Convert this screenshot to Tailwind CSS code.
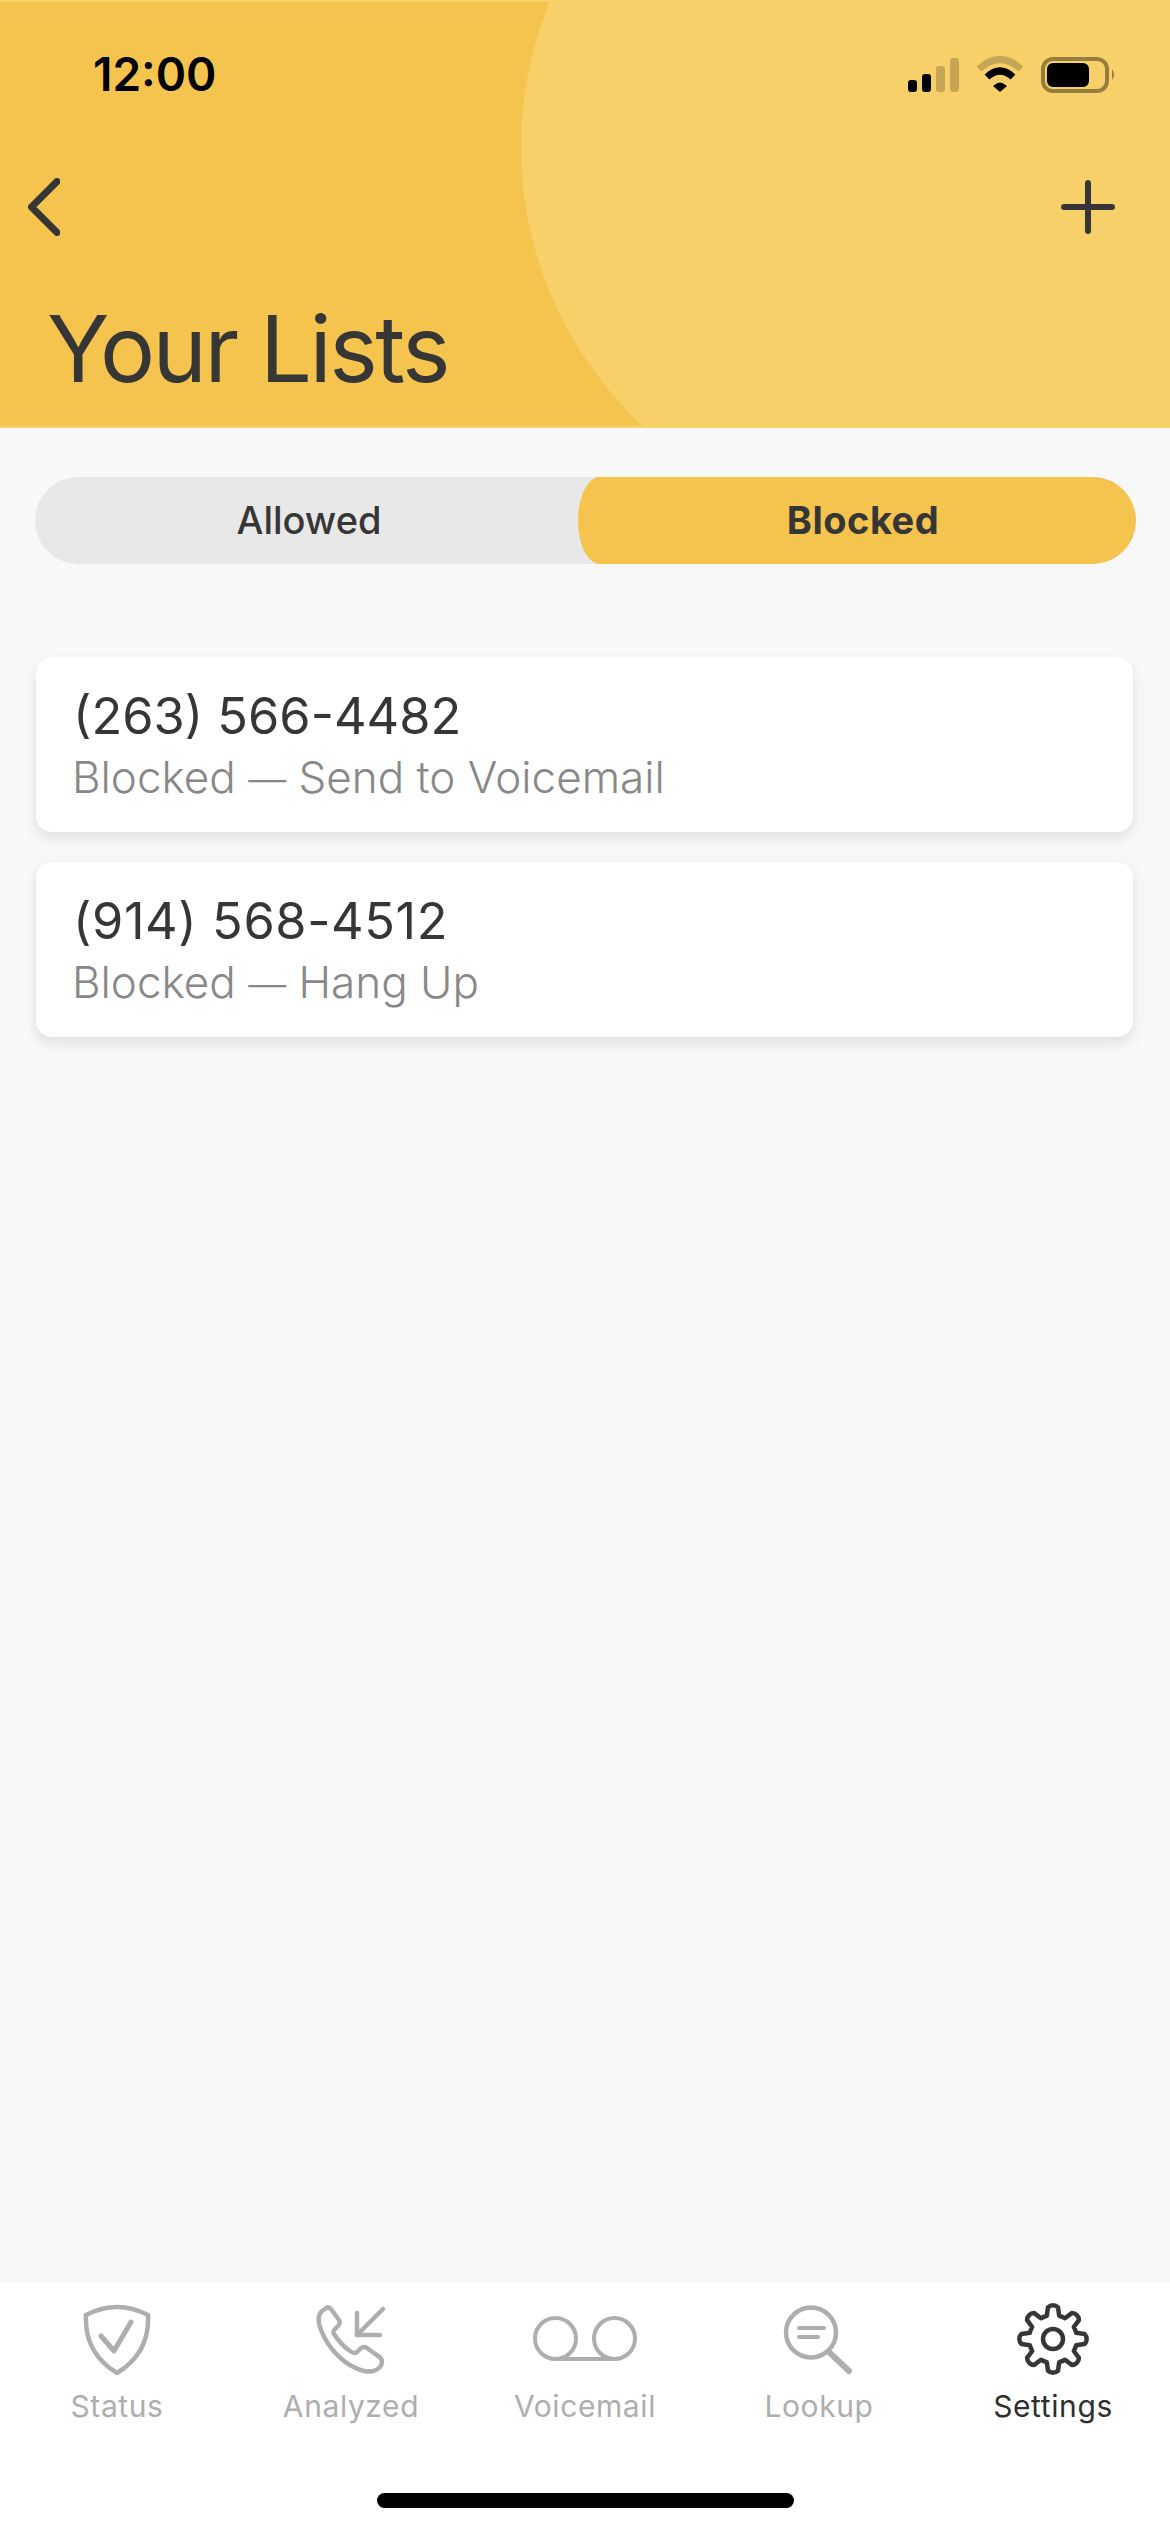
<!DOCTYPE html>
<html>
<head>
<meta charset="utf-8">
<script src="https://cdn.jsdelivr.net/npm/@tailwindcss/browser@4"></script>
</head>
<body class="m-0 bg-[#f8f8f8]">
<div class="relative w-[1170px] h-[2532px] overflow-hidden flex flex-col bg-[#f8f8f8] font-['Inter','Liberation_Sans',sans-serif]">
  <header class="relative h-[428px] shrink-0 overflow-hidden bg-[#f5c44e] border-y-[2px] border-y-[#f8d36a]">
    <div class="absolute left-[521px] top-[-235px] w-[760px] h-[760px] rounded-full bg-[#f8d069]"></div>
    <div class="absolute left-[901px] right-0 top-0 bottom-0 bg-[#f8d069]"></div>
    <div class="relative h-[166px] flex items-start justify-between">
      <span class="ml-[93px] mt-[45px] text-[46px] leading-[54px] font-semibold text-black">12:00</span>
      <svg class="mt-[54px] mr-[54px]" width="208" height="37" viewBox="0 0 208 37">
        <rect x="0" y="24" width="9" height="12" rx="3" fill="#000"/>
        <rect x="14" y="18" width="9" height="18" rx="3" fill="#000"/>
        <rect x="28" y="10" width="9" height="26" rx="3" fill="#000" opacity=".2"/>
        <rect x="42" y="2" width="9" height="34" rx="3" fill="#000" opacity=".2"/>
        <path d="M71 13Q92-6 113 13" fill="none" stroke="#000" stroke-opacity=".2" stroke-width="7"/>
        <path d="M79 21Q92 9 105 21" fill="none" stroke="#000" stroke-width="7"/>
        <path d="M85 30Q92 23 99 30L92 36z" fill="#000"/>
        <rect x="135" y="3" width="64" height="32" rx="10" fill="none" stroke="#000" stroke-opacity=".4" stroke-width="4"/>
        <rect x="139" y="7" width="42" height="24" rx="6" fill="#000"/>
        <path d="M204 13q4 5.500 0 11z" fill="#000" fill-opacity=".4"/>
      </svg>
    </div>
    <div class="relative h-[78px] flex items-center justify-between pl-[28px] pr-[55px]">
      <svg width="32" height="58" viewBox="0 0 32 58" fill="none" stroke="#363636" stroke-width="7" stroke-linecap="round" stroke-linejoin="round"><path d="M29 3.500 3.500 29 29 54.500"/></svg>
      <svg width="54" height="54" viewBox="0 0 54 54" fill="none" stroke="#363636" stroke-width="6" stroke-linecap="round"><path d="M27 3v48M3 27h48"/></svg>
    </div>
    <h1 class="relative ml-[47px] mt-[48px] text-[92px] leading-[110px] font-normal tracking-[-2.5px] text-[#363636]">Your Lists</h1>
  </header>

  <main class="flex-1 pl-[35px] pt-[49px]">
    <div class="relative h-[87px] w-[1101px] rounded-full bg-[#e8e8e8] flex text-[38px] text-[#363636]">
      <div class="w-[548px] flex items-center justify-center font-medium">Allowed</div>
      <div class="absolute left-[543px] right-0 top-0 bottom-0 rounded-[22px_44px_44px_22px/44px] bg-[#f5c44e] flex items-center justify-center pl-[12px] font-bold tracking-[0.5px]">Blocked</div>
    </div>
    <div class="mt-[93px] ml-[1px] flex flex-col gap-[30px] w-[1097px]">
      <div class="h-[175px] rounded-[16px] bg-white shadow-[0_6px_14px_rgba(0,0,0,0.1)] px-[37px] pt-[28px]">
        <div class="text-[50.5px] leading-[62px] text-[#363636]">(263) 566-4482</div>
        <div class="-ml-[1px] text-[44px] leading-[61px] font-light text-[#888888]">Blocked <span class="text-[38px]">—</span> Send to Voicemail</div>
      </div>
      <div class="h-[175px] rounded-[16px] bg-white shadow-[0_6px_14px_rgba(0,0,0,0.1)] px-[37px] pt-[28px]">
        <div class="text-[50.5px] leading-[62px] tracking-[0.6px] text-[#363636]">(914) 568-4512</div>
        <div class="-ml-[1px] text-[44px] leading-[61px] font-light text-[#888888]">Blocked <span class="text-[38px]">—</span> Hang Up</div>
      </div>
    </div>
  </main>

  <nav class="h-[249px] shrink-0 bg-white grid grid-cols-5 text-[30px] leading-[36px] tracking-[0.6px] text-[#aeaeae] pt-[20px]">
    <div class="flex flex-col items-center gap-[13px]">
      <svg width="72" height="72" viewBox="0 0 72 72" fill="none" stroke="#aeaeae" stroke-width="4.500" stroke-linecap="round"><path d="M5 12Q36-4 67 12 69 50 36 70 3 50 5 12Z"/><path d="M20 33 33 48 50 19" stroke-width="5" stroke-linejoin="round"/></svg>
      <span>Status</span>
    </div>
    <div class="flex flex-col items-center gap-[13px]">
      <svg width="72" height="72" viewBox="0 0 72 72" fill="none" stroke="#aeaeae" stroke-width="4.500" stroke-linecap="round" stroke-linejoin="round"><path d="M10 6c-7 3-8 12-4 21 7 18 23 36 43 41 10 2 17-2 18-9 0-3-2-5-4-6l-11-8c-3-2-5-1-7 1l-3 3c-2 2-4 1-7-1-6-4-12-11-16-17-1-2-1-3 1-5l3-3c2-2 2-4 1-6l-8-11c-2-2-4-2-6 0z"/><path d="M68 6 42 32M42 10v22h23"/></svg>
      <span>Analyzed</span>
    </div>
    <div class="flex flex-col items-center gap-[13px]">
      <svg width="104" height="72" viewBox="0 0 104 72" fill="none" stroke="#aeaeae" stroke-width="4"><circle cx="22.500" cy="35.500" r="20.500"/><circle cx="81.500" cy="35.500" r="20.500"/><path d="M22 56h60"/></svg>
      <span>Voicemail</span>
    </div>
    <div class="flex flex-col items-center gap-[13px]">
      <svg width="72" height="72" viewBox="0 0 72 72" fill="none" stroke="#aeaeae" stroke-width="4.500" stroke-linecap="round"><circle cx="28" cy="29.500" r="25"/><path d="M47 50 66 68" stroke-width="6"/><path d="M16 25h25M16 34h19" stroke-width="4"/></svg>
      <span>Lookup</span>
    </div>
    <div class="flex flex-col items-center gap-[13px] text-[#2f2f2f]">
      <svg width="72" height="72" viewBox="-36 -36 72 72" fill="none" stroke="#363636" stroke-width="4.500" stroke-linejoin="round"><path d="M-6.200-23.200-5-31.600A7 7 0 0 1 5-31.600L6.200-23.200A24 24 0 0 1 12-20.800L18.800-25.900A7 7 0 0 1 25.900-18.800L20.800-12A24 24 0 0 1 23.200-6.200L31.600-5A7 7 0 0 1 31.600 5L23.200 6.200A24 24 0 0 1 20.800 12L25.900 18.800A7 7 0 0 1 18.800 25.900L12 20.800A24 24 0 0 1 6.200 23.200L5 31.600A7 7 0 0 1-5 31.600L-6.200 23.200A24 24 0 0 1-12 20.800L-18.800 25.900A7 7 0 0 1-25.900 18.800L-20.800 12A24 24 0 0 1-23.200 6.200L-31.600 5A7 7 0 0 1-31.600-5L-23.200-6.200A24 24 0 0 1-20.800-12L-25.900-18.800A7 7 0 0 1-18.800-25.900L-12-20.800A24 24 0 0 1-6.200-23.200Z"/><circle cx="0" cy="0" r="10"/></svg>
      <span>Settings</span>
    </div>
  </nav>
  <div class="absolute left-[377px] top-[2493px] w-[417px] h-[15px] rounded-full bg-black"></div>
</div>
</body>
</html>
